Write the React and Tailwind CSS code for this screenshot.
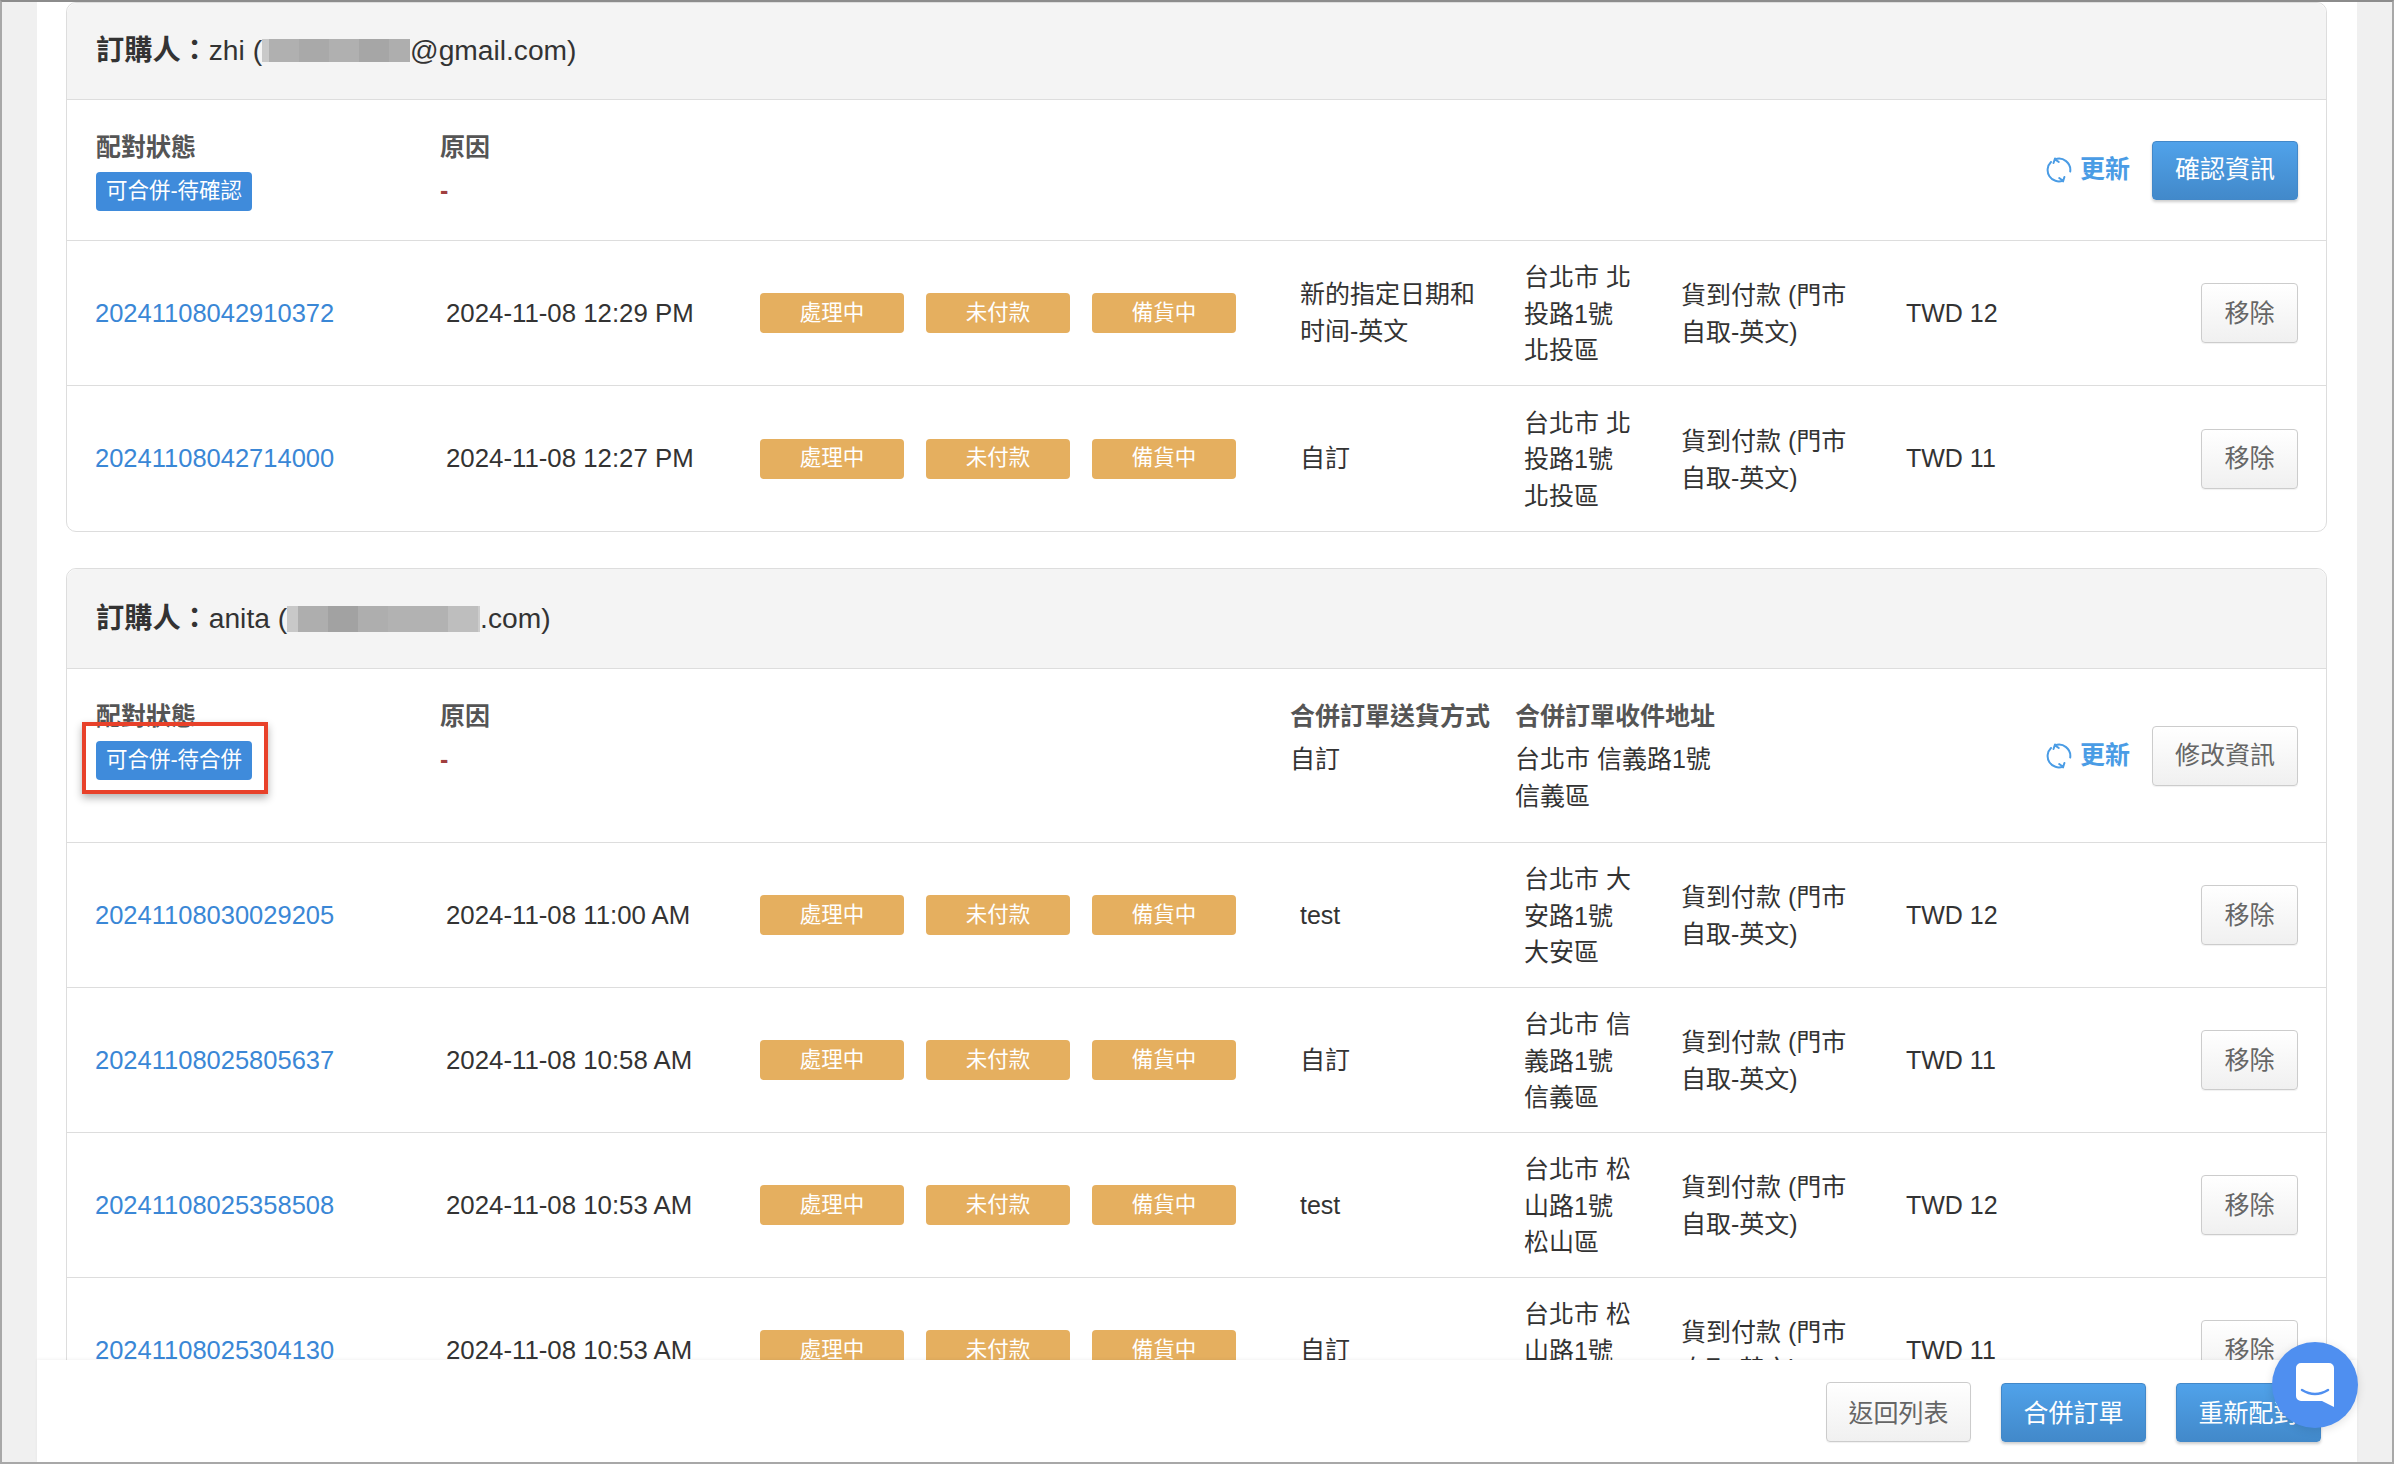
const FONT = "font-['Liberation_Sans','Noto_Sans_CJK_TC',sans-serif]";

const firstOrders = [
  { id: "20241108042910372", time: "2024-11-08 12:29 PM", ship: "新的指定日期和时间-英文", addr: "台北市 北投路1號 北投區", amount: "TWD 12" },
  { id: "20241108042714000", time: "2024-11-08 12:27 PM", ship: "自訂", addr: "台北市 北投路1號 北投區", amount: "TWD 11" },
];

const secondOrders = [
  { id: "20241108030029205", time: "2024-11-08 11:00 AM", ship: "test", addr: "台北市 大安路1號 大安區", amount: "TWD 12" },
  { id: "20241108025805637", time: "2024-11-08 10:58 AM", ship: "自訂", addr: "台北市 信義路1號 信義區", amount: "TWD 11" },
  { id: "20241108025358508", time: "2024-11-08 10:53 AM", ship: "test", addr: "台北市 松山路1號 松山區", amount: "TWD 12" },
  { id: "20241108025304130", time: "2024-11-08 10:53 AM", ship: "自訂", addr: "台北市 松山路1號 松山區", amount: "TWD 11" },
];

const zhiBlur = [
  ["w-[7px]", "bg-[#c9c9c9]"],
  ["w-[30px]", "bg-[#b0b0b0]"],
  ["w-[30px]", "bg-[#a9a9a9]"],
  ["w-[30px]", "bg-[#b0b0b0]"],
  ["w-[30px]", "bg-[#a6a6a6]"],
  ["w-[21px]", "bg-[#aeaeae]"],
];

const anitaBlur = [
  ["w-[11px]", "bg-[#c8c8c8]"],
  ["w-[30px]", "bg-[#aeaeae]"],
  ["w-[30px]", "bg-[#a2a2a2]"],
  ["w-[30px]", "bg-[#aeaeae]"],
  ["w-[60px]", "bg-[#b2b2b2]"],
  ["w-[30px]", "bg-[#bebebe]"],
  ["w-[2px]", "bg-[#cccccc]"],
];

function Blur({ blocks, height }) {
  return (
    <span className={`inline-flex align-middle ${height}`}>
      {blocks.map(([w, bg], i) => (
        <span key={i} className={`block h-full ${w} ${bg}`} />
      ))}
    </span>
  );
}

function DefaultButton({ children, className = "" }) {
  return (
    <button className={`h-[60px] rounded-[4px] border border-[#cccccc] bg-gradient-to-b from-white to-[#f0f0f0] text-[25px] text-[#666666] shadow-[0_1px_1px_rgba(0,0,0,0.06)] ${className}`}>
      {children}
    </button>
  );
}

function PrimaryButton({ children, className = "" }) {
  return (
    <button className={`h-[59px] rounded-[4px] border border-[#4288c9] bg-gradient-to-b from-[#50a2ea] to-[#4289ca] text-[25px] text-white shadow-[0_2px_3px_rgba(0,0,0,0.2)] ${className}`}>
      {children}
    </button>
  );
}

function RefreshLink() {
  return (
    <a className="mr-[22px] flex items-center gap-[8px] text-[25px] font-bold text-[#4a9ce5]">
      <svg width="26" height="26" viewBox="0 0 26 26" fill="none" stroke="currentColor" strokeWidth="2" strokeLinecap="round">
        <path d="M9 2.4 A11.3 11.3 0 0 1 24.2 14.5" />
        <path d="M9 1.5 L7.5 6 M9 2.4 L12.8 5" />
        <path d="M5 5 A11.3 11.3 0 0 0 17 23.6" />
        <path d="M17 24.4 L18.4 20 M17 23.8 L13.2 21" />
      </svg>
      更新
    </a>
  );
}

function StatusBadge({ text }) {
  return (
    <span className="mt-[5px] flex h-[39px] w-[156px] items-center justify-center rounded-[4px] bg-[#3f8bdb] text-[21.5px] text-white">
      {text}
    </span>
  );
}

function Tag({ text }) {
  return (
    <span className="flex h-[40px] w-[144px] items-center justify-center rounded-[4px] bg-[#e5af5f] text-[21.5px] text-white">
      {text}
    </span>
  );
}

function OrderRow({ order, last }) {
  return (
    <div className={`flex h-[145px] shrink-0 items-center pl-[28px] pr-[28px] leading-[36.6px] text-[#333333] ${last ? "" : "border-b border-[#dddddd]"}`}>
      <a className="w-[351px] shrink-0 text-[25.5px] text-[#3a87d6]">{order.id}</a>
      <span className="w-[314px] shrink-0 text-[25.8px]">{order.time}</span>
      <div className="flex w-[540px] shrink-0 gap-[22px]">
        <Tag text="處理中" />
        <Tag text="未付款" />
        <Tag text="備貨中" />
      </div>
      <span className="w-[224px] shrink-0 pr-[40px]">{order.ship}</span>
      <span className="w-[157px] shrink-0 pr-[43px] pt-[2px]">{order.addr}</span>
      <span className="w-[225px] shrink-0 pr-[50px] pt-[2px]">貨到付款 (門市自取-英文)</span>
      <span className="flex-1">{order.amount}</span>
      <DefaultButton className="w-[97px]">移除</DefaultButton>
    </div>
  );
}

function Label({ children }) {
  return <div className="h-[37px] font-bold leading-[35px] text-[#555555]">{children}</div>;
}

function Reason() {
  return (
    <>
      <Label>原因</Label>
      <div className="mt-[5px] h-[39px] font-bold leading-[36px] text-[#a03f3f]">-</div>
    </>
  );
}

export default function App() {
  return (
    <div className={`${FONT} relative flex h-[1464px] w-[2394px] flex-col overflow-hidden border-2 border-[#a8a8a8] border-t-[#8c8c8c] bg-[#f0f0f0] text-[25px] text-[#333333]`}>
      <div className="mx-[35px] flex min-h-0 flex-1 flex-col bg-white">
        <div className="min-h-0 flex-1 overflow-hidden pl-[29px] pr-[30px]">
          {/* first buyer */}
          <section className="rounded-[10px] border border-[#dddddd]">
            <header className="flex h-[97px] items-center rounded-t-[10px] border-b border-[#dddddd] bg-[#f4f4f4] pb-[2px] pl-[29px] text-[28.2px]">
              <b className="font-bold">訂購人：</b>
              <span className="whitespace-pre">zhi (</span>
              <Blur blocks={zhiBlur} height="h-[23px]" />
              <span>@gmail.com)</span>
            </header>
            <div className="flex h-[141px] items-center border-b border-[#dddddd] pl-[29px] pr-[28px]">
              <div className="w-[344px] shrink-0">
                <Label>配對狀態</Label>
                <StatusBadge text="可合併-待確認" />
              </div>
              <div className="flex-1">
                <Reason />
              </div>
              <RefreshLink />
              <PrimaryButton className="w-[146px]">確認資訊</PrimaryButton>
            </div>
            {firstOrders.map((order, i) => (
              <OrderRow key={order.id} order={order} last={i === firstOrders.length - 1} />
            ))}
          </section>

          {/* second buyer */}
          <section className="mt-[36px] rounded-[10px] border border-[#dddddd]">
            <header className="flex h-[100px] items-center rounded-t-[10px] border-b border-[#dddddd] bg-[#f4f4f4] pl-[29px] text-[28.2px]">
              <b className="font-bold">訂購人：</b>
              <span className="whitespace-pre">anita (</span>
              <Blur blocks={anitaBlur} height="h-[26px]" />
              <span>.com)</span>
            </header>
            <div className="flex h-[174px] items-center border-b border-[#dddddd] pl-[29px] pr-[28px]">
              <div className="w-[344px] shrink-0 self-start pt-[30px]">
                <Label>配對狀態</Label>
                <StatusBadge text="可合併-待合併" />
              </div>
              <div className="w-[850px] shrink-0 self-start pt-[30px]">
                <Reason />
              </div>
              <div className="w-[225px] shrink-0 self-start pt-[30px]">
                <Label>合併訂單送貨方式</Label>
                <div className="mt-[5px] leading-[37px]">自訂</div>
              </div>
              <div className="flex-1 self-start pt-[30px]">
                <Label>合併訂單收件地址</Label>
                <div className="mt-[5px] leading-[37px]">
                  台北市 信義路1號
                  <br />
                  信義區
                </div>
              </div>
              <RefreshLink />
              <DefaultButton className="w-[146px]">修改資訊</DefaultButton>
            </div>
            {secondOrders.map((order) => (
              <OrderRow key={order.id} order={order} />
            ))}
          </section>
        </div>

        <footer className="relative flex h-[102px] shrink-0 items-center justify-end gap-[30px] bg-white pt-[2px] pr-[36px] shadow-[0_-1px_3px_rgba(0,0,0,0.05)]">
          <DefaultButton className="w-[145px] pt-[4px]">返回列表</DefaultButton>
          <PrimaryButton className="w-[145px] pt-[4px]">合併訂單</PrimaryButton>
          <PrimaryButton className="w-[145px] pt-[4px]">重新配對</PrimaryButton>
        </footer>
      </div>

      {/* annotation drawn over the screenshot */}
      <div className="absolute left-[80px] top-[720px] h-[72px] w-[186px] border-[4px] border-[#e8412a] shadow-[0_4px_8px_rgba(0,0,0,0.3)]" />

      {/* chat bubble */}
      <div className="absolute left-[2270px] top-[1340px] flex h-[86px] w-[86px] items-center justify-center rounded-full bg-[#4f8ff0] shadow-[0_2px_10px_rgba(0,0,0,0.12)]">
        <svg width="38" height="44" viewBox="0 0 38 44">
          <path d="M5 0 H33 A5 5 0 0 1 38 5 V44 L26 38 H5 A5 5 0 0 1 0 33 V5 A5 5 0 0 1 5 0 Z" fill="white" />
          <path d="M6 27 Q19 35 32 27" fill="none" stroke="#4f8ff0" strokeWidth="2.5" strokeLinecap="round" />
        </svg>
      </div>
    </div>
  );
}
